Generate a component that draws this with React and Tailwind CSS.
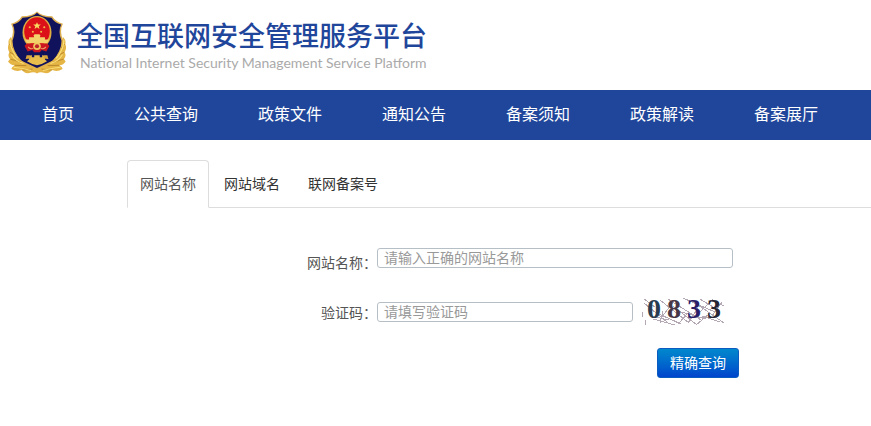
import React, { useState } from 'react';

const navItems = ['首页', '公共查询', '政策文件', '通知公告', '备案须知', '政策解读', '备案展厅'];

const tabs = [
  { label: '网站名称', placeholder: '请输入正确的网站名称' },
  { label: '网站域名', placeholder: '请输入正确的网站域名' },
  { label: '联网备案号', placeholder: '请输入正确的联网备案号' },
];

const Emblem = () => (
  <svg viewBox="25 32 168 182" className="h-[63px] w-[58px] shrink-0" aria-hidden="true">
    {/* Shield */}
    <path d="M109 33 Q96 46 65 47 Q56 62 34 69 Q45 90 33 118 Q30 150 60 180 L109 204 L158 180 Q188 150 185 118 Q173 90 184 69 Q162 62 153 47 Q122 46 109 33 Z" fill="#dcae50" />
    <path d="M109 37 Q97 50 67 51 Q58 66 39 71 Q49 92 38 118 Q38 148 64 176 L109 197 L154 176 Q180 148 180 118 Q169 92 179 71 Q160 66 151 51 Q121 50 109 37 Z" fill="#11125c" />
    {/* Wreath */}
    <path d="M34 106 Q24 116 27 128 Q22 140 29 151 Q23 162 31 171 L25 178 Q32 188 44 189 Q34 196 35 200 Q50 209 66 203 Q74 216 92 210 Q102 207 109 213 Q116 207 126 210 Q144 216 152 203 Q168 209 183 200 Q184 196 174 189 Q186 188 192 178 L187 171 Q195 162 189 151 Q196 140 191 128 Q194 116 184 106 Q184 146 157 173 Q138 189 109 199 Q80 189 61 173 Q34 146 34 106 Z" fill="#e5b545" />
    <g fill="none" stroke="#a87722" strokeWidth="2">
      <path d="M29 128 L40 139 M30 151 L49 161 M32 171 L62 180 M45 189 L78 190 M66 203 L96 200" />
      <path d="M189 128 L178 139 M188 151 L169 161 M186 171 L156 180 M173 189 L140 190 M152 203 L122 200" />
    </g>
    <g fill="none" stroke="#fae17d" strokeWidth="3">
      <path d="M31 115 Q31 142 53 169 M35 158 Q47 178 70 184 M41 195 Q64 197 92 204" />
      <path d="M187 115 Q187 142 165 169 M183 158 Q171 178 148 184 M177 195 Q154 197 126 204" />
    </g>
    {/* Wall */}
    <path d="M80 177 L86 172 V163 L94 159 V166 H101 V160 H117 V166 H124 V159 L132 163 V172 L138 177 Q124 186 109 189 Q94 186 80 177 Z" fill="#e9bd4b" />
    <path d="M79 160 H90 V169 L76 171 Z M128 160 H139 L142 171 L128 169 Z" fill="#d9a53a" />
    {/* National emblem */}
    <ellipse cx="109" cy="94" rx="42" ry="48" fill="#dfae41" />
    <ellipse cx="109" cy="91" rx="37" ry="41" fill="#dc1018" />
    <path d="M109 64 l3 7 h8 l-6 5 2 8 -7 -5 -7 5 2 -8 -6 -5 h8 z" fill="#f9d860" />
    <circle cx="88" cy="79" r="3" fill="#f3bd48" />
    <circle cx="97" cy="92" r="3" fill="#f3bd48" />
    <circle cx="121" cy="92" r="3" fill="#f3bd48" />
    <circle cx="130" cy="79" r="3" fill="#f3bd48" />
    <path d="M99 103 L102 99 H116 L119 103 L117 108 H132 V114 H144 L138 125 H80 L74 114 H86 V108 H101 Z" fill="#f4d26b" />
    <path d="M79 126 H139 L145 133 L136 149 L123 145 L117 151 H101 L95 145 L82 149 L73 133 Z" fill="#ca1720" />
    <circle cx="109" cy="134" r="11" fill="#f0c75d" />
    <circle cx="109" cy="134" r="6" fill="#bd222a" />
    <path d="M83 136 Q92 144 98 139 M135 136 Q126 144 120 139" fill="none" stroke="#ec9d68" strokeWidth="3" />
  </svg>
);

const Captcha = () => (
  <svg viewBox="0 0 84 28" className="h-7 w-[84px] overflow-visible" role="img" aria-label="验证码图片">
    <g stroke="#b5a8b5" strokeWidth="1" fill="none" shapeRendering="crispEdges">
      <path d="M3 1 L14 9 M1 14 L2 19 M3 5 L26 24 M4 22 L5 27 M12 21 L34 27 M19 2 L48 25 M27 1 L60 22 M32 8 L56 27 M42 0 L74 14 M50 2 L83 25 M59 1 L72 9 M61 18 L79 24 M69 2 L83 8 M18 16 L40 26 M22 13 L19 25 M33 3 L21 19 M48 14 L37 26 M57 10 L47 25 M68 16 L55 27 M81 4 L71 18 M40 14 L65 21 M72 1 L59 14 M14 19 L28 22 M46 20 L76 19" />
    </g>
    <g fontSize="28" fontWeight="bold" className="font-['Liberation_Serif',serif]">
      <text x="6" y="20" fill="#293c50">0</text>
      <text x="26" y="20" fill="#473746">8</text>
      <text x="46" y="20" fill="#2a1e69">3</text>
      <text x="66" y="20" fill="#252536">3</text>
    </g>
  </svg>
);

const inputClass =
  'h-5 rounded-[3px] border border-[#b6bfc6] bg-white px-1.5 pb-0.5 text-sm leading-4 text-[#555] placeholder-[#999] outline-none';

const App = () => {
  const [activeTab, setActiveTab] = useState(0);
  const { label, placeholder } = tabs[activeTab];

  return (
    <div lang="zh-CN" className="bg-white font-['Noto_Sans_CJK_SC',sans-serif] text-sm text-[#555]">
      {/* Header */}
      <header className="flex h-[90px] items-start gap-2.5 px-2 pt-[11px]">
        <Emblem />
        <div className="pt-1">
          <h1 className="text-[27px] leading-10 font-medium whitespace-nowrap text-[#1f469b]">
            全国互联网安全管理服务平台
          </h1>
          <p className="pl-1 font-[Lato,sans-serif] text-sm leading-4 whitespace-nowrap text-[#aaa]">
            National Internet Security Management Service Platform
          </p>
        </div>
      </header>

      {/* Navigation */}
      <nav className="bg-[#20469b] px-3">
        <ul className="flex">
          {navItems.map((item) => (
            <li key={item}>
              <a href="#" className="block px-[30px] pb-1 text-base leading-[46px] whitespace-nowrap text-white">
                {item}
              </a>
            </li>
          ))}
        </ul>
      </nav>

      <main className="pt-5 pl-[127px]">
        {/* Tabs */}
        <div className="flex gap-0.5 border-b border-[#ddd]" role="tablist">
          {tabs.map((tab, index) => (
            <button
              key={tab.label}
              type="button"
              role="tab"
              aria-selected={index === activeTab}
              onClick={() => setActiveTab(index)}
              className={`-mb-px h-12 rounded-t border px-3 pb-0.5 ${
                index === activeTab
                  ? 'border-[#ddd] border-b-white bg-white text-[#555]'
                  : 'border-transparent text-[#333]'
              }`}
            >
              {tab.label}
            </button>
          ))}
        </div>

        {/* Search form */}
        <form className="max-w-[612px] pt-10" onSubmit={(e) => e.preventDefault()}>
          <div className="flex items-start pr-1.5">
            <label htmlFor="keyword" className="w-[250px] shrink-0 pt-1 text-right leading-5">
              {label}：
            </label>
            <input id="keyword" type="text" placeholder={placeholder} className={`${inputClass} min-w-0 flex-1`} />
          </div>
          <div className="flex items-center pt-[26px]">
            <label htmlFor="code" className="w-[250px] shrink-0 text-right leading-5">
              验证码：
            </label>
            <input id="code" type="text" placeholder="请填写验证码" className={`${inputClass} mr-2 w-64`} />
            <Captcha />
          </div>
          <div className="flex justify-end pt-[22px]">
            <button
              type="submit"
              className="h-[30px] rounded-[3px] border border-[#0a5cc0] bg-linear-to-b from-[#0088cc] to-[#0044cc] px-3 pb-0.5 text-white"
            >
              精确查询
            </button>
          </div>
        </form>
      </main>
    </div>
  );
};

export default App;
